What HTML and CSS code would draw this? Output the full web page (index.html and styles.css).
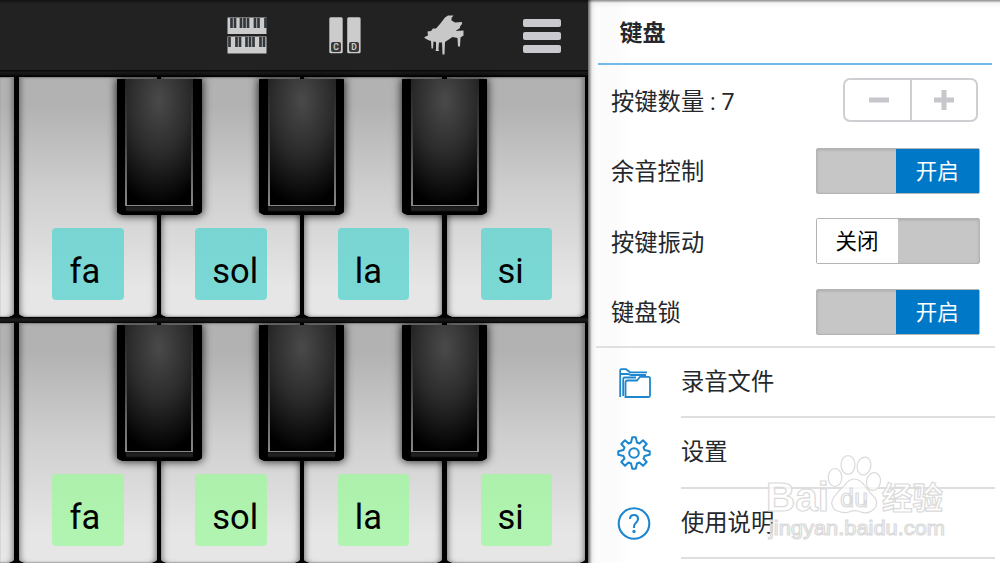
FILE: index.html
```html
<!DOCTYPE html>
<html lang="zh-CN">
<head>
    <meta charset="UTF-8">
    <meta name="viewport" content="width=device-width, initial-scale=1.0">
    <title>键盘</title>
    <link rel="stylesheet" href="styles.css">
</head>
<body>
    <div class="app">
        <div class="piano">
            <div class="toolbar">
                <svg class="icon-rows" width="40" height="37" viewBox="0 0 40 37">
                    <rect x="0.5" y="0.5" width="39" height="16.5" fill="#ccc"/>
                    <rect x="0.5" y="19.5" width="39" height="17" fill="#ccc"/>
                    <path d="M4.500 1v10M8 1v10M14 1v10M17.500 1v10M21 1v10M28 1v10M31.500 1v10M38.500 1v10M2.500 20v10M9.500 20v10M13 20v10M19.500 20v10M23 20v10M26.500 20v10M33.500 20v10M37 20v10" stroke="#32373b" stroke-width="2.700"/>
                </svg>
                <svg class="icon-keys" width="32" height="37" viewBox="0 0 32 37">
                    <rect x="0.3" y="0.3" width="13.400" height="36" rx="1.500" fill="#ccc"/>
                    <rect x="18.200" y="0.3" width="13.400" height="36" rx="1.500" fill="#ccc"/>
                    <rect x="2" y="25" width="10" height="10" rx="2" fill="#3a3a3a"/>
                    <rect x="20" y="25" width="10" height="10" rx="2" fill="#3a3a3a"/>
                    <text x="7" y="33" class="key-letter">C</text>
                    <text x="25" y="33" class="key-letter">D</text>
                </svg>
                <svg class="icon-grand" width="40" height="40" viewBox="0 0 40 40">
                    <path d="M0.500 22L4 20.500 3.500 16.500 7 16 9 13.500 12 13.500 16 9 21 2.500 24 0.500H29.500L27.500 3V5.500L31 7.500 38 7V9L36 11.500V13L31.500 16 39.500 15.500V20.500L36.500 22.500 36 31.500H34L33.500 23 28.500 22 24 25 21 27 20.500 39.500H18.500L18 27.500H15L14.500 34 15 36H11.500L12 34 12 27 9.500 26.500 9 33.500H7.500L7 26 4 25 0.500 23Z" fill="#c8c8c8"/>
                </svg>
                <div class="icon-menu"><span></span><span></span><span></span></div>
            </div>

            <div class="keyboard">
                <div class="key cut"></div>
                <div class="key"><div class="note">fa</div><div class="black"><i></i></div></div>
                <div class="key"><div class="note">sol</div><div class="black"><i></i></div></div>
                <div class="key"><div class="note">la</div><div class="black"><i></i></div></div>
                <div class="key"><div class="note">si</div></div>
            </div>
            <div class="divider"></div>
            <div class="keyboard lower">
                <div class="key cut"></div>
                <div class="key"><div class="note">fa</div><div class="black"><i></i></div></div>
                <div class="key"><div class="note">sol</div><div class="black"><i></i></div></div>
                <div class="key"><div class="note">la</div><div class="black"><i></i></div></div>
                <div class="key"><div class="note">si</div></div>
            </div>
        </div>

        <div class="panel">
            <h1>键盘</h1>
            <div class="options">
                <div class="option">
                    <span>按键数量 : 7</span>
                    <div class="stepper">
                        <button class="minus"><svg width="20" height="20"><path d="M0 10H20" stroke="#c7c7cb" stroke-width="5"/></svg></button>
                        <button><svg width="20" height="20"><path d="M0 10H20M10 0V20" stroke="#c7c7cb" stroke-width="5"/></svg></button>
                    </div>
                </div>
                <div class="option">
                    <span>余音控制</span>
                    <div class="switch on"><b>开启</b></div>
                </div>
                <div class="option">
                    <span>按键振动</span>
                    <div class="switch"><b>关闭</b></div>
                </div>
                <div class="option">
                    <span>键盘锁</span>
                    <div class="switch on"><b>开启</b></div>
                </div>
            </div>
            <div class="menu">
                <div class="item">
                    <svg width="34" height="34" viewBox="0 0 34 34" fill="none" stroke="#1c86cf" stroke-width="1.800">
                        <path d="M3.200 31V4.500Q3.200 3.200 4.500 3.200H9L13 6.300H30M3.500 8H11L14 9H29"/>
                        <path d="M6.200 30V13Q6.200 11.500 7.700 11.500H19"/>
                        <path d="M8.500 31V16.500Q8.500 14.500 10.500 14.500H20L23 10.800H31.500Q33 10.800 33 12.500V29.500Q33 31 31.500 31Z"/>
                    </svg>
                    <span>录音文件</span>
                </div>
                <div class="item">
                    <svg width="34" height="34" viewBox="0 0 34 34" fill="none" stroke="#1c86cf" stroke-width="2" stroke-linejoin="round">
                        <path d="M14 6.500L15.300 1.300H18.700L20 6.500L22.500 7.500L26 4.300L29.700 8L26.500 11.500L27.500 14L32.700 15.300V18.700L27.500 20L26.500 22.500L29.700 26L26 29.700L22.500 26.500L20 27.500L18.700 32.700H15.300L14 27.500L11.500 26.500L8 29.700L4.300 26L7.500 22.500L6.500 20L1.300 18.700V15.300L6.500 14L7.500 11.500L4.300 8L8 4.300L11.500 7.500Z"/>
                        <circle cx="17" cy="17" r="4.800"/>
                    </svg>
                    <span>设置</span>
                </div>
                <div class="item">
                    <svg width="34" height="34" viewBox="0 0 34 34" fill="none" stroke="#1c86cf" stroke-width="2.100">
                        <circle cx="17" cy="16.500" r="15.300"/>
                        <path d="M13 12Q13 8 17 8T21 12Q21 14 19 15.700T17 19.500V21"/>
                        <circle cx="17" cy="24.500" r="0.700"/>
                    </svg>
                    <span>使用说明</span>
                </div>
            </div>
        </div>

        <svg class="watermark" width="185" height="95" viewBox="-5 0 185 95">
            <g class="mark">
                <ellipse cx="65" cy="32.500" rx="6.800" ry="9"/>
                <ellipse cx="78" cy="20" rx="7" ry="9.300"/>
                <ellipse cx="94" cy="21" rx="6.800" ry="9" transform="rotate(12 94 21)"/>
                <ellipse cx="103.500" cy="36.500" rx="7" ry="9" transform="rotate(10 103.500 36.500)"/>
                <path d="M84 34Q90 34 95 41T105 53Q109 60 103 65T88 66Q84 65 79 67T65 65Q59 59 64 52T74 41Q79 34 84 34Z"/>
                <text x="-4" y="66" class="brand" textLength="63" lengthAdjust="spacingAndGlyphs">Bai</text>
                <text x="70" y="62" class="du" textLength="28" lengthAdjust="spacingAndGlyphs">du</text>
                <text x="112" y="64" class="exp" textLength="61" lengthAdjust="spacingAndGlyphs">经验</text>
                <text x="-1" y="89.5" class="site" textLength="176" lengthAdjust="spacingAndGlyphs">jingyan.baidu.com</text>
            </g>
        </svg>
    </div>
</body>
</html>
```
FILE: styles.css
```css
* {
    box-sizing: border-box;
}
body {
    margin: 0;
    font-family: Roboto, "Noto Sans CJK SC", sans-serif;
    color: #24272b;
    background: #fff;
    overflow: hidden;
}
.app {
    position: relative;
    display: flex;
    width: 1000px;
    height: 563px;
    overflow: hidden;
}

/* piano */
.piano {
    flex: 0 0 588px;
    background: #020202;
    overflow: hidden;
}
.toolbar {
    display: flex;
    align-items: flex-start;
    height: 76.5px;
    padding: 15px 0 0 227px;
    background: linear-gradient(#111 0, #222 4px, #222 70px, #090909 70px, #090909 71px, #1b1b1b 72px, #111 75px, #000 76px);
}
.icon-rows {
    margin-top: 2px;
}
.icon-keys {
    margin: 2px 0 0 62px;
}
.icon-grand {
    margin-left: 63px;
}
.key-letter {
    font: bold 8.5px Roboto, sans-serif;
    fill: #ccc;
    text-anchor: middle;
}
.icon-menu {
    display: flex;
    flex-direction: column;
    gap: 5px;
    margin: 4px 0 0 59px;
}
.icon-menu span {
    width: 38px;
    height: 8px;
    border-radius: 2px;
    background: #cac9cf;
}
.keyboard {
    display: flex;
    gap: 4.5px;
    height: 240px;
}
.divider {
    height: 6px;
    background: linear-gradient(#000, #1c1c1c 2px, #141414 5px, #000);
}
.key {
    position: relative;
    flex: 0 0 138.2px;
    padding: 151.5px 0 0 33.7px;
    border-radius: 0 0 9px 9px / 0 0 4px 4px;
    background: linear-gradient(#b2b2b2 12%, #cfcfcf 48%, #e6e6e6 88%);
    box-shadow: inset 0 1px 1px #888, inset 0 -1px 1px #aaa, inset 5px 0 6px -4px rgba(0,0,0,0.5), inset -5px 0 6px -4px rgba(0,0,0,0.5);
}
.key.cut {
    flex-basis: 14.3px;
    padding: 0;
    border-radius: 0 0 9px 0 / 0 0 4px 0;
    box-shadow: inset 0 1px 1px #888, inset 0 -1px 1px #aaa, inset -5px 0 6px -4px rgba(0,0,0,0.5);
}
.note {
    width: 71.5px;
    height: 71.5px;
    padding-left: 17px;
    border-radius: 4px;
    background: linear-gradient(#78d5d1, #7bd9d5);
    color: #000;
    font-size: 34.5px;
    line-height: 86px;
}
.lower .note {
    background: linear-gradient(#adf0ac, #b2f4b1);
}
.black {
    position: absolute;
    z-index: 1;
    top: 2px;
    right: -44.7px;
    width: 85px;
    height: 136px;
    padding: 0 8.5px 9px;
    border-radius: 1px 1px 8px 8px / 1px 1px 4px 4px;
    background: linear-gradient(#000 126px, #1d1d1d 128px, #222 131px, #000 133px);
    box-shadow: inset 9px 0 #000, inset -9px 0 #000, 0 0 8px 1px rgba(0,0,0,0.75);
}
.black i {
    display: block;
    height: 127px;
    border: 2px solid #666;
    border-top: 0;
    border-image: linear-gradient(#222, #444 50%, #8a8a8a) 2;
    border-width: 0 2px 1px;
    background: radial-gradient(ellipse 60px 105px at 50% 22px, #4a4a4a, #2b2b2b 50%, #000);
}

/* settings panel */
.panel {
    flex: 1;
    padding: 0 5px 0 8px;
    background: linear-gradient(rgba(0,0,0,0.45), rgba(0,0,0,0.04) 3px, transparent 8px), linear-gradient(90deg, #666 0, #aaa 2px, #ededed 4px, #fbfbfb 8px, #fcfcfc 30px, #fff 42px);
}
h1 {
    height: 65px;
    margin: 0 3px 0 2px;
    padding-left: 21.5px;
    border-bottom: 2px solid #74b8ea;
    font-size: 23px;
    line-height: 67px;
}
.options {
    height: 283px;
    padding: 0 15.500px 0 15px;
    border-bottom: 2px solid #e0e0e0;
}
.option {
    display: flex;
    justify-content: space-between;
    align-items: center;
    height: 70.3px;
    font-size: 23.3px;
}
.stepper {
    display: flex;
    width: 134.5px;
    height: 44.5px;
    margin-right: 2px;
    border: 2px solid #cfcfd3;
    border-radius: 7px;
}
.stepper button {
    flex: 1;
    padding: 0;
    border: 0;
    background: none;
    line-height: 0;
}
.stepper .minus {
    border-right: 2px solid #cfcfd3;
    padding-left: 2px;
}
.switch {
    width: 164px;
    height: 46px;
    margin-top: 1px;
    border: 1px solid #b4b4b4;
    border-radius: 2px;
    background: #c6c6c6;
    box-shadow: inset 0 1px 3px #aaa;
}
.switch b {
    display: block;
    width: 81px;
    height: 44px;
    background: #fff;
    color: #000;
    font-size: 21.5px;
    font-weight: 400;
    line-height: 45px;
    text-align: center;
}
.switch.on b {
    width: 82.5px;
    margin-left: auto;
    background: #0078c8;
    color: #fff;
}
.item {
    display: flex;
    align-items: center;
    height: 70.3px;
    padding-left: 21px;
    font-size: 23.3px;
}
.item span {
    flex: 1;
    height: 70.3px;
    margin-left: 30px;
    border-bottom: 2px solid #dedede;
    line-height: 69px;
}

.watermark {
    position: absolute;
    left: 765px;
    top: 445px;
}
.mark {
    fill: rgba(255,255,255,0.75);
    stroke: #dadada;
    stroke-width: 1.2px;
}
.brand {
    font: bold 40px "Liberation Sans", sans-serif;
}
.du {
    font: 26px Roboto, sans-serif;
}
.exp {
    font: bold 31px "Noto Sans CJK SC", sans-serif;
}
.site {
    font: 21px "Liberation Sans", sans-serif;
}
```
